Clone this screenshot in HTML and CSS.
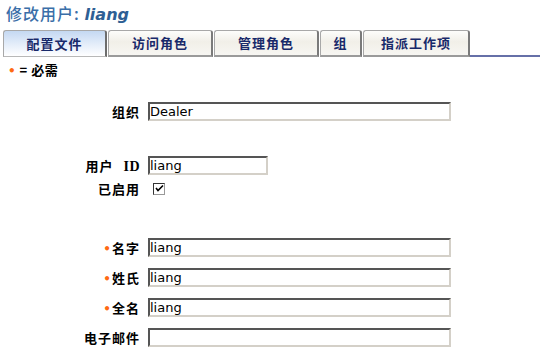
FILE: index.html
```html
<!DOCTYPE html>
<html>
<head>
<meta charset="utf-8">
<link rel="stylesheet" href="styles.css">
</head>
<body>
<h1 class="title">修改用户: <span class="user">liang</span></h1>
<div class="tabs">
  <div class="tab tab-active w1">配置文件</div>
  <div class="tab w2">访问角色</div>
  <div class="tab w2">管理角色</div>
  <div class="tab w3">组</div>
  <div class="tab w4">指派工作项</div>
  <div class="tab-rest"></div>
</div>
<div class="req"><span class="dot">•</span> = 必需</div>
<div class="form">
  <div class="row r-org"><label class="lbl">组织</label><div class="field"><span class="inp wide">Dealer</span></div></div>
  <div class="row r-id"><label class="lbl">用户 <span class="latin">ID</span></label><div class="field"><span class="inp narrow">liang</span></div></div>
  <div class="row r-en"><label class="lbl">已启用</label><div class="field"><span class="chk"><svg width="9" height="9" viewBox="0 0 9 9"><path d="M1 4 L3 6.5 L8 1.5" stroke="#000" stroke-width="1.6" fill="none"/></svg></span></div></div>
  <div class="row r-first"><label class="lbl"><span class="dot">•</span>名字</label><div class="field"><span class="inp wide">liang</span></div></div>
  <div class="row r-n"><label class="lbl"><span class="dot">•</span>姓氏</label><div class="field"><span class="inp wide">liang</span></div></div>
  <div class="row r-n"><label class="lbl"><span class="dot">•</span>全名</label><div class="field"><span class="inp wide">liang</span></div></div>
  <div class="row r-n"><label class="lbl">电子邮件</label><div class="field"><span class="inp wide"></span></div></div>
</div>
</body>
</html>
```
FILE: styles.css
```css
html, body {
  margin: 0;
  padding: 0;
  background: #fff;
}
body {
  font-family: "DejaVu Sans", "Noto Sans CJK SC", sans-serif;
  width: 540px;
  height: 356px;
  overflow: hidden;
}
.title {
  margin: 0;
  padding: 3px 0 0 6px;
  height: 26px;
  box-sizing: border-box;
  font-family: "Noto Sans CJK SC", sans-serif;
  font-size: 16px;
  font-weight: 500;
  line-height: 20px;
  color: #3a6ea8;
  letter-spacing: 1px;
}
.user {
  font-family: "DejaVu Sans", sans-serif;
  font-style: italic;
  font-weight: bold;
  font-size: 16px;
  color: #2e5f94;
  letter-spacing: 0;
}
.tabs {
  display: flex;
  align-items: flex-end;
  height: 31px;
  padding-left: 3px;
}
.tab {
  box-sizing: border-box;
  height: 27px;
  margin-right: 1px;
  border: 1px solid #a8a8a8;
  border-right: 2px solid #7a7a7a;
  border-bottom: 2px solid #9a9a9a;
  border-radius: 3px 3px 0 0;
  background: linear-gradient(to bottom, #fdfdfb 0%, #f1efe8 45%, #f7f6f2 100%);
  font-family: "Noto Sans CJK SC", sans-serif;
  font-weight: bold;
  font-size: 13px;
  letter-spacing: 1px;
  color: #18296a;
  display: flex;
  align-items: center;
  justify-content: center;
  padding-bottom: 1px;
}
.tab-active {
  background: linear-gradient(to bottom, #c4d8f2 0%, #e2ecf9 50%, #ffffff 100%);
  border-bottom: 1px solid #b8b8b8;
  border-right: 2px solid #6d6d6d;
}
.w1 { width: 104px; }
.w2 { width: 105px; }
.w3 { width: 42px; }
.w4 { width: 107px; }
.tab-rest {
  flex: 1;
  height: 2px;
  background: #6670a8;
  margin-left: -1px;
}
.req {
  font-family: "Noto Sans CJK SC", sans-serif;
  font-weight: bold;
  font-size: 13px;
  letter-spacing: 0.5px;
  color: #000;
  padding: 3px 0 0 8px;
  height: 21px;
  line-height: 20px;
}
.dot {
  color: #ff6a13;
  font-family: "DejaVu Sans", sans-serif;
  font-size: 12px;
}
.form {
  display: flex;
  flex-direction: column;
}
.row {
  display: flex;
  align-items: center;
  height: 19px;
}
.lbl {
  width: 140px;
  box-sizing: border-box;
  padding-right: 0px;
  text-align: right;
  font-family: "Noto Sans CJK SC", sans-serif;
  font-weight: bold;
  font-size: 13px;
  letter-spacing: 1px;
  color: #000;
}
.latin {
  font-family: "Liberation Serif", serif;
  font-weight: bold;
  font-size: 14px;
  margin-left: 6px;
  letter-spacing: 0.5px;
}
.field {
  margin-left: 8px;
  display: flex;
  align-items: center;
}
.inp {
  display: block;
  box-sizing: border-box;
  height: 19px;
  border-style: solid;
  border-width: 2px 2px 2px 2px;
  border-color: #555 #d4d0c8 #d4d0c8 #555;
  background: #fff;
  font-family: "DejaVu Sans", sans-serif;
  font-size: 13px;
  line-height: 15px;
  padding-left: 0px;
  color: #000;
}
.wide { width: 303px; }
.narrow { width: 120px; }
.chk {
  display: flex;
  align-items: center;
  justify-content: center;
  box-sizing: border-box;
  width: 12px;
  height: 12px;
  margin-left: 5px;
  border: 1px solid;
  border-color: #333 #999 #999 #333;
  background: #fff;
}
.r-org { margin-top: 21px; }
.r-id { margin-top: 35px; }
.r-en { margin-top: 4px; }
.r-first { margin-top: 40px; }
.r-n { margin-top: 11px; }
```
